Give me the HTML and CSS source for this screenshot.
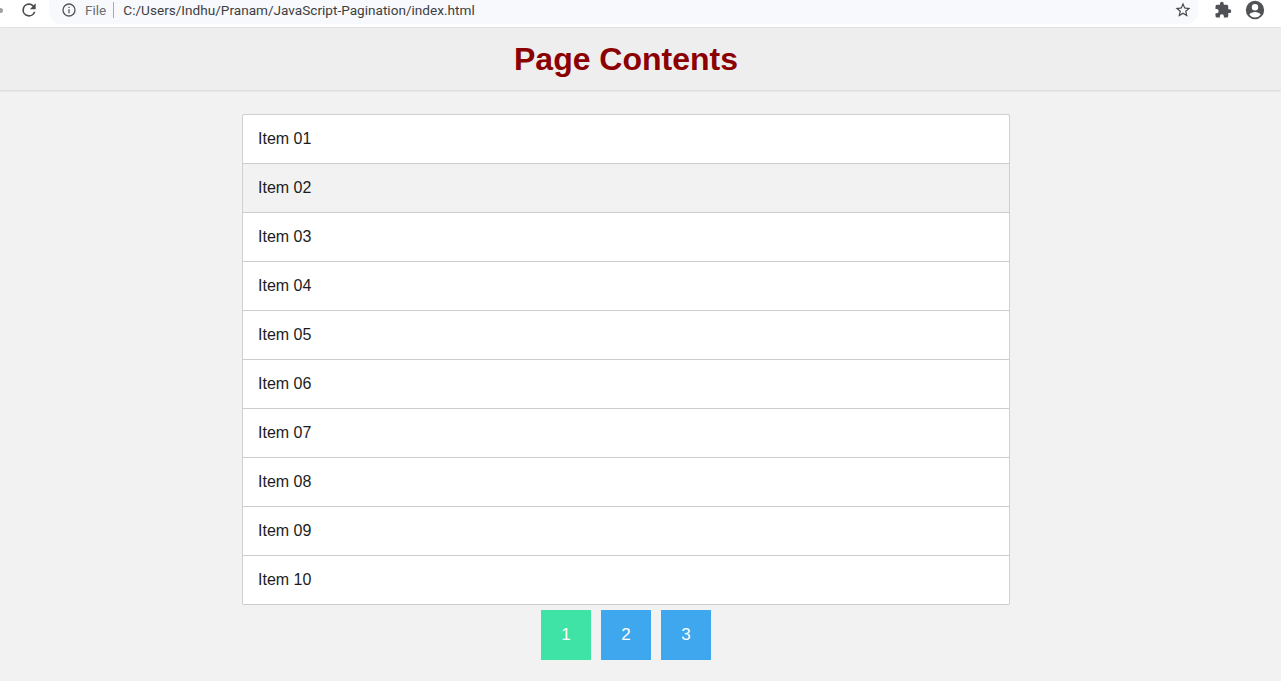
FILE: index.html
```html
<!DOCTYPE html>
<html lang="en">
<head>
<meta charset="utf-8">
<title>Page Contents</title>
<link rel="stylesheet" href="styles.css">
</head>
<body>
<div class="toolbar">
  <span class="back"></span>
  <svg class="reload" viewBox="0 0 24 24" width="20" height="20"><path d="M17.65 6.35A7.96 7.96 0 0 0 12 4a8 8 0 1 0 7.73 10h-2.08A6 6 0 1 1 12 6c1.66 0 3.14.69 4.22 1.78L13 11h7V4l-2.35 2.35z"/></svg>
  <div class="omnibox">
    <svg class="info" viewBox="0 0 24 24" width="16" height="16"><path d="M11 7h2v2h-2zm0 4h2v6h-2zm1-9a10 10 0 1 0 0 20 10 10 0 0 0 0-20zm0 18a8 8 0 1 1 0-16 8 8 0 0 1 0 16z"/></svg>
    <span class="scheme">File</span>
    <span class="sep"></span>
    <span class="url">C:/Users/Indhu/Pranam/JavaScript-Pagination/index.html</span>
    <svg class="star" viewBox="0 0 24 24" width="18" height="18"><path d="M22 9.24l-7.19-.62L12 2 9.19 8.63 2 9.24l5.46 4.73L5.82 21 12 17.27 18.18 21l-1.63-7.03L22 9.24zM12 15.4l-3.76 2.27 1-4.28-3.32-2.88 4.38-.38L12 6.1l1.71 4.04 4.38.38-3.32 2.88 1 4.28L12 15.4z"/></svg>
  </div>
  <svg class="puzzle" viewBox="0 0 24 24" width="18" height="18"><path d="M20.5 11H19V7a2 2 0 0 0-2-2h-4V3.5a2.5 2.5 0 0 0-5 0V5H4a2 2 0 0 0-2 2v3.8h1.5a2.7 2.7 0 0 1 0 5.4H2V20a2 2 0 0 0 2 2h3.8v-1.5a2.7 2.7 0 0 1 5.4 0V22H17a2 2 0 0 0 2-2v-4h1.5a2.5 2.5 0 0 0 0-5z"/></svg>
  <svg class="avatar" viewBox="0 0 24 24" width="22" height="22"><path d="M12 2a10 10 0 1 0 0 20 10 10 0 0 0 0-20zm0 3.5a3.5 3.5 0 1 1 0 7 3.5 3.5 0 0 1 0-7zm0 14.6a8 8 0 0 1-6.2-3c.6-1.9 3.900-2.900 6.200-2.900s5.600 1 6.200 2.900a8 8 0 0 1-6.200 3z"/></svg>
</div>
<header class="header"><h1 class="title">Page Contents</h1></header>
<main class="content">
  <ul class="list">
    <li class="item">Item 01</li>
    <li class="item item-alt">Item 02</li>
    <li class="item">Item 03</li>
    <li class="item">Item 04</li>
    <li class="item">Item 05</li>
    <li class="item">Item 06</li>
    <li class="item">Item 07</li>
    <li class="item">Item 08</li>
    <li class="item">Item 09</li>
    <li class="item">Item 10</li>
  </ul>
  <nav class="pager">
    <a class="page-btn page-btn-active">1</a>
    <a class="page-btn">2</a>
    <a class="page-btn">3</a>
  </nav>
</main>
</body>
</html>
```
FILE: styles.css
```css
* { box-sizing: border-box; }
html, body { margin: 0; height: 100%; overflow: hidden; }
body {
  background: #f2f2f2;
  font-family: "Liberation Sans", Arial, sans-serif;
  color: #1c1c1c;
}
.toolbar {
  height: 28px;
  background: #fff;
  border-bottom: 1px solid #e4e5e6;
  display: flex;
  align-items: flex-start;
}
.back {
  width: 3px;
  height: 5px;
  margin-top: 8px;
  background: #a0a1a3;
  border-radius: 0 3px 3px 0;
}
.reload { fill: #4a4c50; margin-left: 16px; }
.omnibox {
  width: 1149px;
  height: 24px;
  margin-left: 10px;
  padding: 0 6px 4px 12px;
  background: #f8f9fc;
  border-radius: 0 0 12px 12px;
  display: flex;
  align-items: center;
  font-family: "Roboto", "Liberation Sans", sans-serif;
  font-size: 13.6px;
}
.info { fill: #55575b; flex: none; }
.scheme { color: #6a6c70; margin-left: 8px; }
.sep { width: 1px; height: 16px; background: #a8a9ac; margin: 0 9px 0 7px; }
.url { color: #3c3e42; flex: 1; }
.star { fill: #46484c; }
.puzzle { fill: #4f5155; margin: 1px 0 0 16px; }
.avatar { fill: #505256; margin: -1px 0 0 12px; }
.header {
  height: 62px;
  padding-right: 29px;
  background: #eeeeee;
  box-shadow: 0 1px 2px rgba(0, 0, 0, 0.12);
  display: flex;
  align-items: center;
  justify-content: center;
}
.title {
  margin: 0;
  font-size: 32px;
  font-weight: 700;
  color: #8b0000;
}
.content {
  display: flex;
  flex-direction: column;
  align-items: center;
  padding: 24px 29px 0 0;
}
.list {
  width: 768px;
  margin: 0;
  padding: 0;
  list-style: none;
  background: #fff;
  border: 1px solid #d0d0d0;
  border-bottom: 0;
  border-radius: 2px;
}
.item {
  height: 49px;
  padding-left: 15px;
  border-bottom: 1px solid #cccccc;
  display: flex;
  align-items: center;
  font-size: 16px;
}
.item-alt { background: #f2f2f2; }
.pager {
  display: flex;
  gap: 10px;
  margin-top: 5px;
}
.page-btn {
  width: 50px;
  height: 50px;
  background: #3fa7ee;
  color: #fff;
  font-size: 17px;
  display: flex;
  align-items: center;
  justify-content: center;
}
.page-btn-active { background: #3fe3a5; }
```
